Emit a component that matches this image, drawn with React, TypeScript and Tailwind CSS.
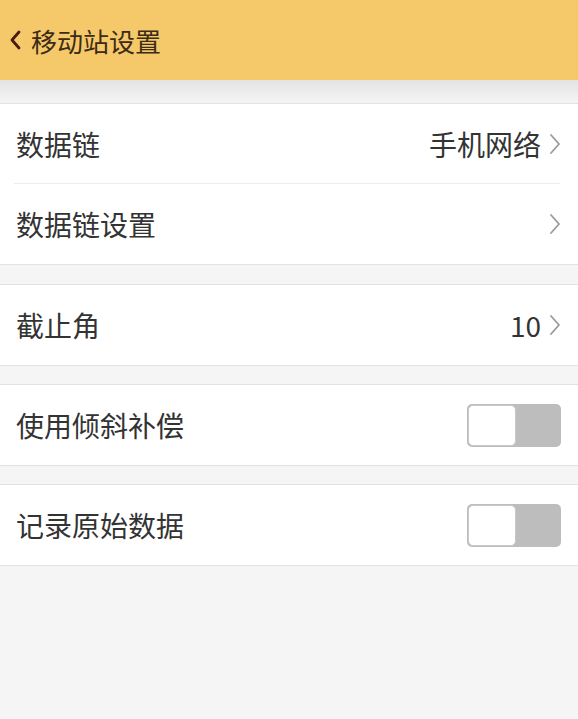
import { useState } from "react";

const font = { fontFamily: '"Noto Sans CJK SC", "Noto Sans", sans-serif' };

function Chevron() {
  return (
    <svg width="12" height="22" viewBox="0 0 12 22" className="ml-[8px]">
      <path d="M2 2 L10 11 L2 20" fill="none" stroke="#9a9a9a" strokeWidth="1.8" strokeLinecap="round" strokeLinejoin="round" />
    </svg>
  );
}

function Toggle({ on, onChange }: { on: boolean; onChange: () => void }) {
  return (
    <button
      onClick={onChange}
      className={`flex h-[43px] w-[94px] rounded-[5px] p-[1px] ${on ? "justify-end bg-[#f5c96a]" : "justify-start bg-[#bdbdbd]"}`}
    >
      <span className="h-full w-[48px] rounded-[5px] border border-[#c8c8c8] bg-white" />
    </button>
  );
}

function Row({ label, children, divider }: { label: string; children?: React.ReactNode; divider?: boolean }) {
  return (
    <div className="relative flex h-[80px] items-center justify-between bg-white pl-[16px] pr-[17px]">
      <span className="text-[28px] text-[#333]">{label}</span>
      <div className="flex items-center text-[28px] text-[#333]">{children}</div>
      {divider && <div className="absolute bottom-0 left-[14px] right-[18px] h-px bg-[#ececec]" />}
    </div>
  );
}

export default function App() {
  const [tilt, setTilt] = useState(false);
  const [raw, setRaw] = useState(false);

  return (
    <div className="h-[719px] w-[578px] overflow-hidden bg-[#f5f5f5]" style={font}>
      <div className="flex h-[80px] items-center bg-[#f5c96a] pl-[9px]">
        <svg width="14" height="22" viewBox="0 0 14 22">
          <path d="M10 3 L3 11 L10 19" fill="none" stroke="#4a1c10" strokeWidth="2.8" strokeLinecap="round" strokeLinejoin="round" />
        </svg>
        <span className="ml-[8px] text-[26px] text-[#3d2b16]">移动站设置</span>
      </div>
      <div className="h-[23px] bg-gradient-to-b from-[#e4e4e4] to-[#f4f4f4]" />

      <div className="border-y border-[#e2e2e2]">
        <Row label="数据链" divider>
          手机网络
          <Chevron />
        </Row>
        <Row label="数据链设置">
          <Chevron />
        </Row>
      </div>

      <div className="mt-[19px] border-y border-[#e2e2e2]">
        <Row label="截止角">
          10
          <Chevron />
        </Row>
      </div>

      <div className="mt-[18px] border-y border-[#e2e2e2]">
        <Row label="使用倾斜补偿">
          <Toggle on={tilt} onChange={() => setTilt(!tilt)} />
        </Row>
      </div>

      <div className="mt-[18px] border-y border-[#e2e2e2]">
        <Row label="记录原始数据">
          <Toggle on={raw} onChange={() => setRaw(!raw)} />
        </Row>
      </div>
    </div>
  );
}
